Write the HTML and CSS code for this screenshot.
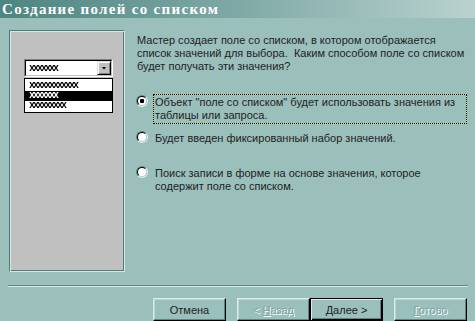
FILE: index.html
```html
<!DOCTYPE html>
<html lang="ru">
<head>
    <meta charset="UTF-8">
    <title>Создание полей со списком</title>
    <link rel="stylesheet" href="styles.css">
</head>
<body>
    <div class="titlebar">Создание полей со списком</div>

    <div class="wizard">
        <div class="preview">
            <div class="combo">
                <div class="combo-field">
                    <span class="combo-text">xxxxxxx</span>
                    <span class="combo-btn"><span class="arrow"></span></span>
                </div>
            </div>
            <ul class="combo-list">
                <li>xxxxxxxxxxxx</li>
                <li class="selected">xxxxxxx</li>
                <li>xxxxxxxxx</li>
            </ul>
        </div>

        <div class="content">
            <p class="intro">Мастер создает поле со списком, в котором отображается<br>список значений для выбора.&nbsp; Каким способом поле со списком<br>будет получать эти значения?</p>

            <div class="options">
                <div class="option">
                    <span class="radio checked"></span>
                    <span class="option-label focused">Объект "поле со списком" будет использовать значения из<br>таблицы или запроса.</span>
                </div>
                <div class="option option-second">
                    <span class="radio"></span>
                    <span class="option-label">Будет введен фиксированный набор значений.</span>
                </div>
                <div class="option option-third">
                    <span class="radio"></span>
                    <span class="option-label">Поиск записи в форме на основе значения, которое<br>содержит поле со списком.</span>
                </div>
            </div>
        </div>
    </div>

    <div class="separator"></div>

    <div class="buttons">
        <button class="btn">Отмена</button>
        <button class="btn btn-back" disabled>&lt; <u>Н</u>азад</button>
        <button class="btn btn-default"><u>Д</u>алее &gt;</button>
        <button class="btn btn-finish" disabled><u>Г</u>отово</button>
    </div>
</body>
</html>
```

FILE: styles.css
```css
html, body {
    margin: 0;
    overflow: hidden;
}

body {
    width: 475px;
    height: 321px;
    background: #9bbfbb;
    color: #1e1e1e;
    font-family: "Liberation Sans", Arial, sans-serif;
    font-size: 11px;
}

.titlebar {
    height: 18px;
    line-height: 18px;
    padding-left: 2px;
    background: linear-gradient(to right, #4c8581, #7fa9a6 50%, #b9d2cf);
    color: #fff;
    font-family: "Liberation Serif", "Times New Roman", serif;
    font-size: 15px;
    font-weight: bold;
    letter-spacing: 1.3px;
    white-space: nowrap;
}

.wizard {
    display: flex;
    gap: 12px;
    padding: 12px 0 0 9px;
}

/* left picture */
.preview {
    width: 116px;
    height: 242px;
    box-sizing: border-box;
    padding: 28px 0 0 14px;
    background: #c0c0c0;
    border: 1px solid;
    border-color: #4f7d7a #d7e7e5 #d7e7e5 #4f7d7a;
    box-shadow: inset 1px 1px #d7e7e5, inset -1px -1px #4f7d7a;
}

.combo {
    width: 89px;
    height: 18px;
    box-sizing: border-box;
    border: 1px solid;
    border-color: #808080 #fff #fff #808080;
}

.combo-field {
    display: flex;
    align-items: center;
    height: 100%;
    box-sizing: border-box;
    border: 1px solid;
    border-color: #000 #c0c0c0 #c0c0c0 #000;
    background: #fff;
}

.combo-text {
    flex: 1;
    padding-left: 3px;
}

/* placeholder rows, grey-smoothed like the original bitmap */
.combo-text,
.combo-list li {
    color: #000;
    font-family: "Liberation Mono", monospace;
    font-size: 10px;
    font-weight: bold;
    letter-spacing: -2px;
    opacity: 0.99;
}

.combo-btn {
    display: flex;
    align-items: center;
    justify-content: center;
    width: 14px;
    height: 14px;
    box-sizing: border-box;
    background: #c0c0c0;
    border: 1px solid;
    border-color: #dfdfdf #000 #000 #dfdfdf;
    box-shadow: inset 1px 1px #fff, inset -1px -1px #808080;
}

.arrow {
    width: 5px;
    height: 3px;
    background: #000;
    clip-path: polygon(0 0, 100% 0, 50% 100%);
}

.combo-list {
    list-style: none;
    width: 89px;
    box-sizing: border-box;
    margin: 1px 0 0;
    padding: 2px 0 1px;
    background: #fff;
    border: 1px solid #000;
}

.combo-list li {
    height: 10px;
    line-height: 10px;
    padding-left: 4px;
}

.combo-list .selected {
    background: #000;
    color: #fff;
}

/* right side */
.content {
    width: 330px;
}

.intro {
    margin: 4px 0 0;
    line-height: 13px;
}

.options {
    margin-top: 21px;
}

.option {
    display: flex;
    align-items: flex-start;
}

.option-second {
    margin-top: 6px;
}

.option-third {
    margin-top: 18px;
}

.radio {
    flex: none;
    display: flex;
    align-items: center;
    justify-content: center;
    width: 12px;
    height: 12px;
    box-sizing: border-box;
    margin: 1px 5px 0 -1px;
    border-radius: 50%;
    border: 1px solid;
    border-color: #5b8683 #e4efee #e4efee #5b8683;
}

.radio::before {
    content: "";
    width: 10px;
    height: 10px;
    box-sizing: border-box;
    border-radius: 50%;
    border: 1px solid;
    border-color: #000 #b5d0cd #b5d0cd #000;
    background: #fff;
}

.radio.checked::before {
    background: radial-gradient(circle, #000 0 2px, #fff 2.5px);
}

.option-label {
    flex: 1;
    padding: 1px;
    line-height: 13px;
    border: 1px solid transparent;
}

.option-label.focused {
    border: 1px dotted #000;
    background: linear-gradient(#9bbfbb, #9bbfbb) padding-box, linear-gradient(#c9db8a, #c9db8a) border-box;
}

.separator {
    width: 460px;
    height: 1px;
    margin: 13px 0 0 8px;
    background: #5b8683;
    border-bottom: 1px solid #dcebe9;
}

/* bottom buttons */
.buttons {
    display: flex;
    padding: 11px 0 0 153px;
}

.btn {
    width: 73px;
    height: 23px;
    box-sizing: border-box;
    padding: 0;
    background: #9bbfbb;
    color: #1e1e1e;
    font-family: inherit;
    font-size: 11px;
    border: 1px solid;
    border-color: #dcebe9 #000 #000 #dcebe9;
    box-shadow: inset -1px -1px #5b8683, inset 1px 1px #bcd6d3;
}

.btn-back,
.btn-finish {
    margin-left: 11px;
}

.btn-default {
    border-color: #000;
    box-shadow: inset 1px 1px #dcebe9, inset -1px -1px #000, inset -2px -2px #5b8683;
}

.btn:disabled {
    color: #7fa5a1;
    text-shadow: 1px 1px 0 #fff;
}
```
